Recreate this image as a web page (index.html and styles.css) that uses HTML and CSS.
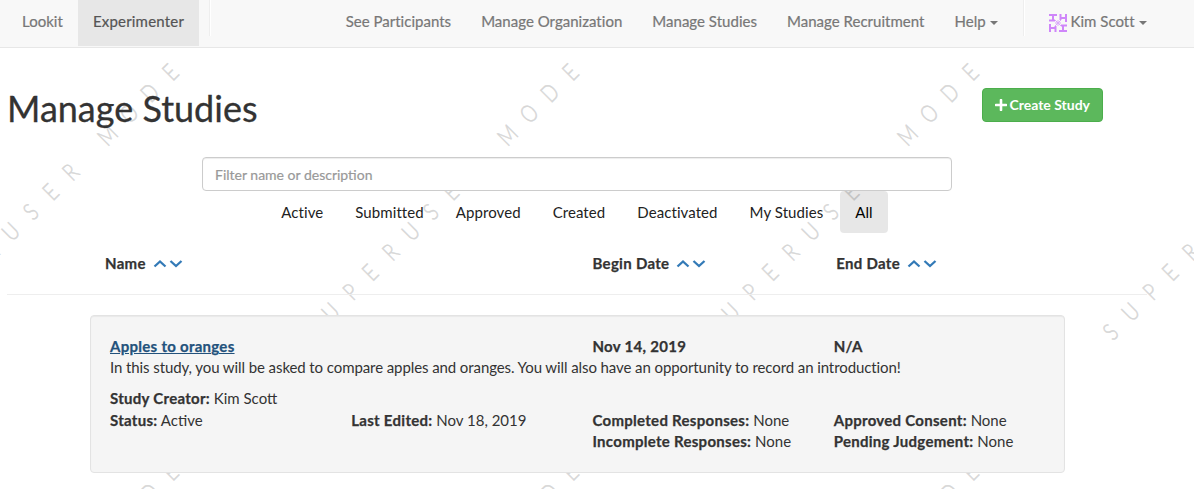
FILE: index.html
```html
<!DOCTYPE html>
<html lang="en">
<head>
<meta charset="utf-8">
<title>Manage Studies</title>
<link rel="stylesheet" href="styles.css">
</head>
<body>
<svg class="watermark" width="1194" height="489" aria-hidden="true">
  <defs>
    <g id="mark">
      <text class="mark-text" transform="translate(310.500 332) rotate(-45) scale(.78 1)" y="8.5" x="0 36.5 73 108 145 182 218 254 290 357 396 434 471">SUPERUSERMODE</text>
    </g>
  </defs>
  <use href="#mark" x="-400"/><use href="#mark"/><use href="#mark" x="400"/><use href="#mark" x="800"/>
  <use href="#mark" x="-400" y="400"/><use href="#mark" y="400"/><use href="#mark" x="400" y="400"/><use href="#mark" x="800" y="400"/>
</svg>
<nav class="navbar">
  <a class="nav-link">Lookit</a>
  <a class="nav-link active">Experimenter</a>
  <span class="divider"></span>
  <div class="nav-right">
    <a class="nav-link">See Participants</a>
    <a class="nav-link">Manage Organization</a>
    <a class="nav-link">Manage Studies</a>
    <a class="nav-link">Manage Recruitment</a>
    <a class="nav-link">Help <i class="caret"></i></a>
    <span class="divider"></span>
    <a class="nav-link user"><svg class="avatar" width="18" height="18" viewBox="0 0 18 18"><g id="q" fill="none" stroke="#cf86fa" stroke-width="2"><path d="M0 1h8M4 1v5M0 6.500h6"/></g><use href="#q" transform="rotate(90 9 9)"/><use href="#q" transform="rotate(180 9 9)"/><use href="#q" transform="rotate(270 9 9)"/><path d="M6 6l6 6M12 6l-6 6M9 6.500l2.500 2.500-2.500 2.500-2.500-2.500z" fill="none" stroke="#dba8fa"/></svg>Kim Scott <i class="caret"></i></a>
  </div>
</nav>
<main class="container">
  <header class="title-row">
    <h1>Manage Studies</h1>
    <button class="create"><svg width="12" height="12" viewBox="0 0 12 12"><path d="M6 1v10M1 6h10" stroke="#fff" stroke-width="2.6" stroke-linecap="round"/></svg>Create Study</button>
  </header>
  <input class="search" type="text" placeholder="Filter name or description">
  <div class="pills">
    <a>Active</a><a>Submitted</a><a>Approved</a><a>Created</a><a>Deactivated</a><a>My Studies</a><a class="active">All</a>
  </div>
  <div class="columns">
    <div>Name <svg class="sort" width="30" height="10" viewBox="0 0 30 10"><path d="M1.500 7.500l5.500-5 5.500 5M17.500 2l5.500 5 5.500-5"/></svg></div>
    <div>Begin Date <svg class="sort" width="30" height="10" viewBox="0 0 30 10"><path d="M1.500 7.500l5.500-5 5.500 5M17.500 2l5.500 5 5.500-5"/></svg></div>
    <div>End Date <svg class="sort" width="30" height="10" viewBox="0 0 30 10"><path d="M1.500 7.500l5.500-5 5.500 5M17.500 2l5.500 5 5.500-5"/></svg></div>
  </div>
  <hr>
  <section class="card">
    <div class="grid head"><a class="study">Apples to oranges</a><b class="begin">Nov 14, 2019</b><b>N/A</b></div>
    <p class="desc">In this study, you will be asked to compare apples and oranges. You will also have an opportunity to record an introduction!</p>
    <div class="creator"><b>Study Creator:</b> Kim Scott</div>
    <div class="grid stats">
      <div><b>Status:</b> Active</div>
      <div><b>Last Edited:</b> Nov 18, 2019</div>
      <div><b>Completed Responses:</b> None<br><b>Incomplete Responses:</b> None</div>
      <div><b>Approved Consent:</b> None<br><b>Pending Judgement:</b> None</div>
    </div>
  </section>
</main>
</body>
</html>
```
FILE: styles.css
```css
* { box-sizing: border-box; }
html, body { height: 489px; overflow: hidden; }
body {
  margin: 0;
  position: relative;
  z-index: 0;
  background: #fff;
  color: #333;
  font: 15px/21.43px Lato, sans-serif;
}
.watermark { position: absolute; left: 0; top: 0; z-index: -1; }
.mark-text {
  font: 300 24px Lato, sans-serif;
  fill: #d6d6d6;
  stroke: #d6d6d6;
  stroke-width: .5px;
  text-anchor: middle;
}

.navbar {
  display: flex;
  height: 48px;
  padding-left: 7px;
  background: #f8f8f8;
  border-bottom: 1px solid #e7e7e7;
}
.nav-link {
  height: 46px;
  padding: 11px 15px;
  color: #777;
  letter-spacing: .02px;
  white-space: nowrap;
  -webkit-text-stroke: .2px;
}
.nav-link.active { background: #e7e7e7; color: #555; letter-spacing: .2px; }
.divider { width: 1px; height: 36px; margin: 0 10px; background: #eee; box-shadow: 1px 0 #fff; }
.nav-right { display: flex; margin-left: auto; margin-right: 32.5px; }
.caret {
  display: inline-block;
  vertical-align: middle;
  border: 4px solid transparent;
  border-top-color: #777;
  border-bottom: 0;
}
.avatar { vertical-align: -5px; margin-right: 4px; }

.container { width: 1140px; margin-left: 7px; }
.title-row { display: flex; justify-content: space-between; padding: 40px 44px 0 0; height: 109px; }
h1 { margin: -1px 0 0; font-size: 36px; font-weight: 400; line-height: 42px; -webkit-text-stroke: .3px; }
.create {
  display: flex;
  align-items: center;
  gap: 2px;
  height: 34px;
  padding: 0 12px 1px;
  border: 1px solid #4cae4c;
  border-radius: 4px;
  background: #5cb85c;
  color: #fff;
  font: 700 14px Lato, sans-serif;
}
.search {
  display: block;
  width: 750px;
  height: 34px;
  margin-left: 195px;
  padding: 6px 12px;
  border: 1px solid #ccc;
  border-radius: 4px;
  background: #fff;
  box-shadow: inset 0 1px 1px rgba(0, 0, 0, .075);
  font: 14px Lato, sans-serif;
}
.search::placeholder { color: #999; opacity: 1; -webkit-text-stroke: .2px; }
.pills { display: flex; justify-content: center; gap: 2px; height: 42px; }
.pills a { padding: 11px 15px 9px; border-radius: 4px; color: #222; letter-spacing: .08px; }
.pills .active { background: rgba(0, 0, 0, .094); color: #000; }
.columns {
  display: grid;
  grid-template-columns: 487.5px 243.75px auto;
  margin: 20px 0 0 98px;
  font-weight: 700;
  letter-spacing: .3px;
}
.sort { fill: none; stroke: #337ab7; stroke-width: 2.3; margin-left: 3px; }
hr { height: 1px; margin: 20px 0; border: 0; background: #eee; }
.card {
  width: 975px;
  height: 158px;
  margin-left: 83px;
  padding: 20px 0 0 19px;
  border: 1px solid #e3e3e3;
  border-radius: 4px;
  background: #f5f5f5;
  box-shadow: inset 0 1px 1px rgba(0, 0, 0, .05);
}
.card b, .study { letter-spacing: .28px; }
.columns, .card b, .study { -webkit-text-stroke: .25px; }
.grid { display: grid; grid-template-columns: repeat(4, 241.25px); }
.study { color: #23527c; font-weight: 700; text-decoration: underline; }
.begin { grid-column: 3; }
.desc { margin: -1px 0 10px; letter-spacing: -.09px; }
```
